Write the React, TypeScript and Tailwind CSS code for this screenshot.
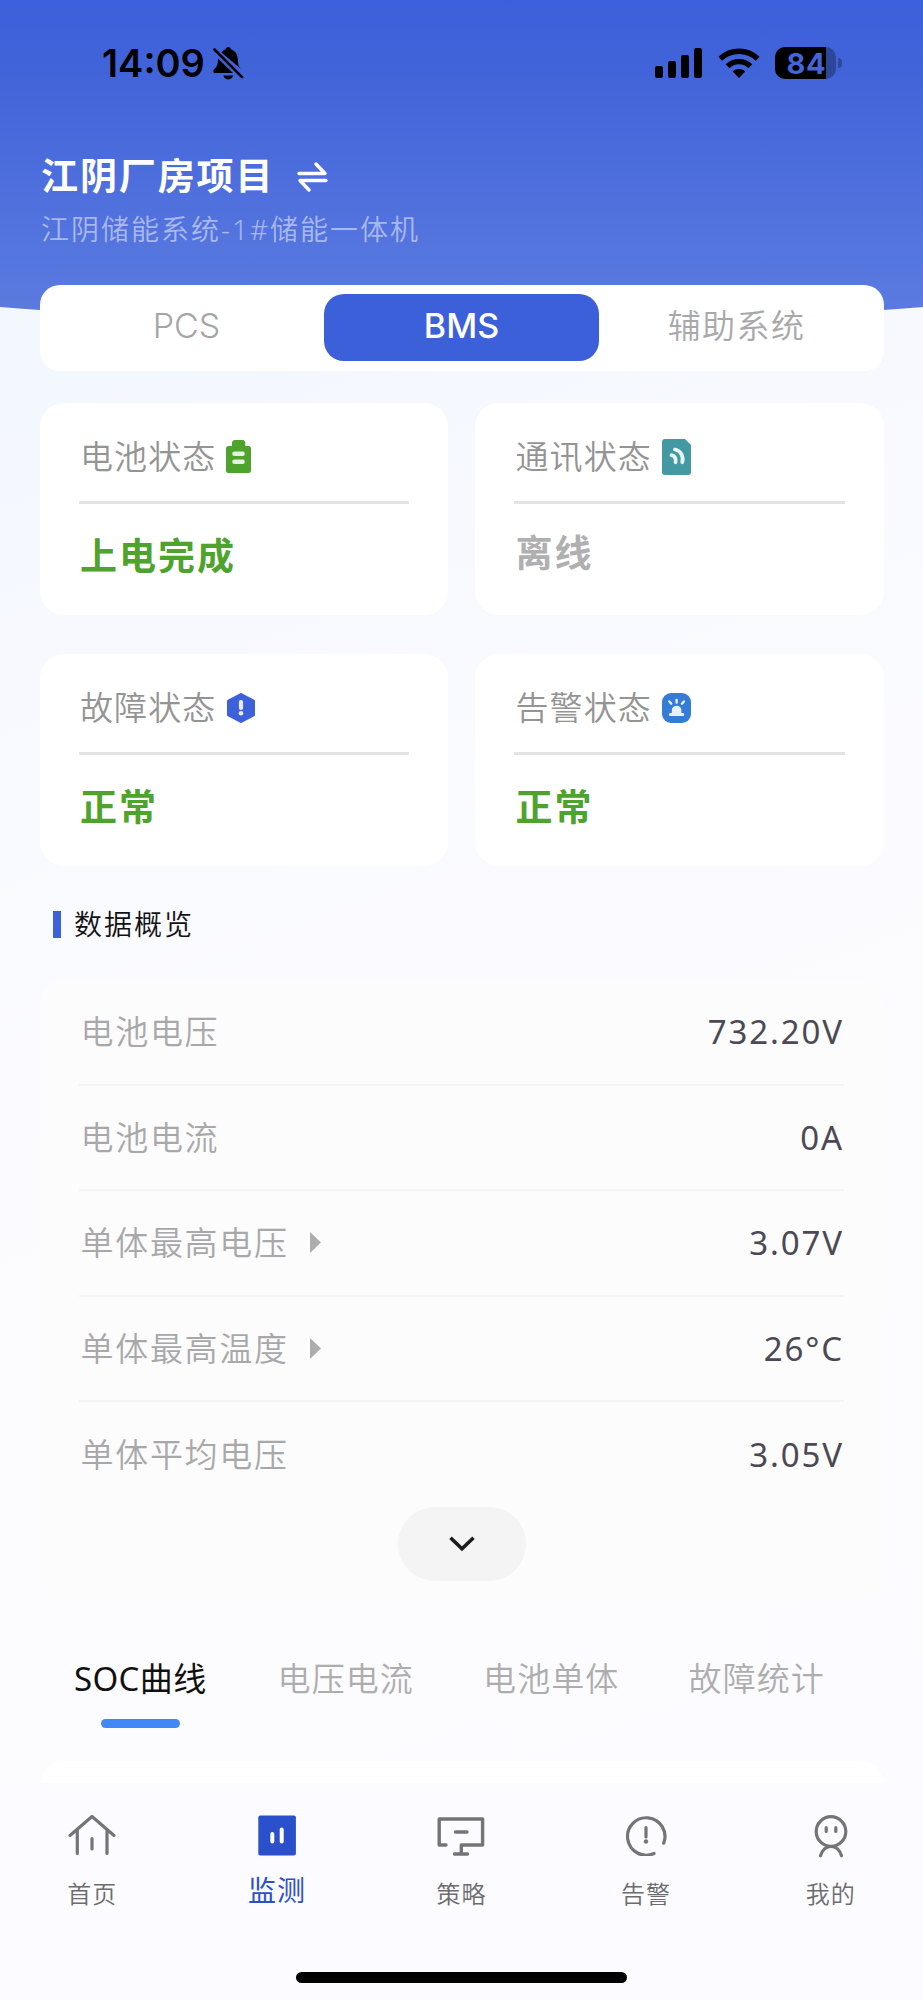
import React from 'react';
import clsx from 'clsx';

interface StatusItem {
  label: string;
  value: string;
  online: boolean;
  icon: React.ReactNode;
}

interface DataRow {
  label: string;
  value: string;
  expandable?: boolean;
}

interface NavItem {
  label: string;
  icon: React.ReactNode;
  active?: boolean;
}

const BatteryIcon = () => (
  <svg width="25" height="33" viewBox="0 0 25 33">
    <path d="M8 0h9.500l1.800 2v4H22.500a2.500 2.500 0 0 1 2.500 2.500v22a2.500 2.500 0 0 1-2.500 2.500H2.500A2.500 2.500 0 0 1 0 30.500v-22A2.500 2.500 0 0 1 2.500 6H6V2z" fill="#4ea32d" />
    <rect x="6.300" y="11.500" width="12.500" height="4.600" rx="2" fill="#e4f2df" />
    <rect x="6.300" y="19.500" width="12.500" height="4.600" rx="2" fill="#e4f2df" />
  </svg>
);

const SignalIcon = () => (
  <svg width="29" height="36" viewBox="0 0 29 36">
    <path d="M3 0h20l6 6v27a3 3 0 0 1-3 3H3a3 3 0 0 1-3-3V3a3 3 0 0 1 3-3z" fill="#4299a2" />
    <g fill="none" stroke="#e6f5f6" strokeWidth="3.800" strokeLinecap="round">
      <path d="M9.500 16.200c3 .4 5 3.200 4 7" />
      <path d="M13 10.500c6 1.200 8.700 7 7.300 12.700" />
    </g>
  </svg>
);

const FaultIcon = () => (
  <svg width="30" height="30" viewBox="0 0 30 30">
    <path d="M15 1.500 27.500 8v14L15 28.500 2.500 22V8z" fill="#3d60db" stroke="#3d60db" strokeWidth="3" strokeLinejoin="round" />
    <rect x="12.900" y="7" width="4.200" height="10" rx="2" fill="#e8edfc" />
    <circle cx="15" cy="20.300" r="2.300" fill="#e8edfc" />
  </svg>
);

const AlarmIcon = () => (
  <svg width="29" height="30" viewBox="0 0 29 30">
    <rect width="29" height="30" rx="9" fill="#357cd6" />
    <path d="M9.800 20v-2.500a4.800 4.800 0 0 1 9.600 0V20h1.400a1.500 1.500 0 0 1 0 3H8.500a1.500 1.500 0 0 1 0-3z" fill="#e8f1fc" />
    <path d="M14.600 7v2.500M7.300 8.500l2 2.200M21.900 8.500l-2 2.200" stroke="#e8f1fc" strokeWidth="2.400" strokeLinecap="round" />
  </svg>
);

const HomeIcon = () => (
  <svg width="48" height="42" viewBox="0 0 48 42" fill="none" stroke="#747476" strokeWidth="3.200" strokeLinecap="round" strokeLinejoin="round">
    <path d="M2 21.500 24 2.500l22 19M9.300 16.500v23M39 16.500v23M24 24.500v10.500" />
  </svg>
);

const MonitorIcon = () => (
  <svg width="48" height="42" viewBox="0 0 48 42">
    <rect x="5.300" y="1.500" width="37.600" height="40" rx="2" fill="#2a50cc" />
    <path d="M19.300 20v7.500M28.700 15.500v12" stroke="#fff" strokeWidth="4" strokeLinecap="round" />
  </svg>
);

const StrategyIcon = () => (
  <svg width="48" height="42" viewBox="0 0 48 42" fill="none" stroke="#747476" strokeWidth="3.400" strokeLinecap="round" strokeLinejoin="round">
    <path d="M9 31H2.200V5h43.400v26H24.300M24.300 31v9M17.500 40h13M18.500 18h11.500" />
  </svg>
);

const WarnIcon = () => (
  <svg width="48" height="42" viewBox="0 0 48 42" fill="none" stroke="#747476" strokeWidth="3.200" strokeLinecap="round">
    <path d="M41.700 29.200A18.700 18.700 0 1 0 32 39.500" />
    <path d="M24 13.500v9.500" />
    <circle cx="24" cy="27.500" r="2.200" fill="#747476" stroke="none" />
  </svg>
);

const MineIcon = () => (
  <svg width="48" height="42" viewBox="0 0 48 42" fill="none" stroke="#747476" strokeWidth="3.200" strokeLinecap="round" className="overflow-visible">
    <circle cx="24" cy="17.500" r="14.800" />
    <path d="M19.200 13.500v4M28.800 13.500v4M13.500 41.800C15.500 35.500 19 32.500 24 32.500s8.500 3 10.500 9.300" />
  </svg>
);

const statusItems: StatusItem[] = [
  { label: '电池状态', value: '上电完成', online: true, icon: <BatteryIcon /> },
  { label: '通讯状态', value: '离线', online: false, icon: <SignalIcon /> },
  { label: '故障状态', value: '正常', online: true, icon: <FaultIcon /> },
  { label: '告警状态', value: '正常', online: true, icon: <AlarmIcon /> }
];

const dataRows: DataRow[] = [
  { label: '电池电压', value: '732.20V' },
  { label: '电池电流', value: '0A' },
  { label: '单体最高电压', value: '3.07V', expandable: true },
  { label: '单体最高温度', value: '26°C', expandable: true },
  { label: '单体平均电压', value: '3.05V' }
];

const chartTabs = ['SOC曲线', '电压电流', '电池单体', '故障统计'];

const navItems: NavItem[] = [
  { label: '首页', icon: <HomeIcon /> },
  { label: '监测', icon: <MonitorIcon />, active: true },
  { label: '策略', icon: <StrategyIcon /> },
  { label: '告警', icon: <WarnIcon /> },
  { label: '我的', icon: <MineIcon /> }
];

const StatusBar = () => (
  <div className="flex h-[126px] items-center justify-between pl-[102px] pr-[81px] text-black">
    <div className="flex items-center">
      <span className="w-[111px] whitespace-nowrap font-['Inter',sans-serif] text-[38px] font-semibold leading-none">14:09</span>
      <svg width="31" height="33" viewBox="0 0 31 33">
        <path d="M8.500 5.500C10 3.600 11.500 2.600 12.500 2.200 13 .8 14 0 15.200 0s2.200.8 2.700 2.200c4.600 1.800 7 5.600 7 10.800 0 4.500.8 6.500 3.400 9.200z" />
        <path d="M5 11.500 20 26H2C.3 26-.3 24 .8 22.800 4 19.500 5 18 5 11.500z" />
        <path d="M10.300 28.500h9.900c-.6 2.300-2.500 3.900-5 3.900s-4.300-1.600-4.900-3.900z" />
        <path d="M1.500 2.500 29 30.200" stroke="#000" strokeWidth="2.600" strokeLinecap="round" />
      </svg>
    </div>
    <div className="flex items-center">
      <svg width="48" height="32" viewBox="0 0 48 32" className="mr-[15px]">
        <rect x="0" y="19" width="8" height="12" rx="2.200" />
        <rect x="13" y="14" width="8" height="17" rx="2.200" />
        <rect x="26" y="8" width="8" height="23" rx="2.200" />
        <rect x="39" y="1" width="8" height="30" rx="2.200" />
      </svg>
      <svg width="42" height="32" viewBox="0 0 42 32" className="mr-[15px]">
        <path d="M21 31l-6.300-6.600c3.600-3.100 9-3.100 12.600 0z" />
        <path d="M9.600 19.300a16.300 16.300 0 0 1 22.800 0" fill="none" stroke="#000" strokeWidth="5.400" />
        <path d="M2.300 11.800a27 27 0 0 1 37.400 0" fill="none" stroke="#000" strokeWidth="5.400" />
      </svg>
      <div className="flex h-8 w-[61px] overflow-hidden rounded-[10px] bg-[#2e4899]">
        <div className="flex w-[51px] items-center justify-end bg-black font-['Inter',sans-serif] text-[29px] font-bold leading-none tracking-[0.500px] text-[#4365d8]">84</div>
      </div>
      <div className="ml-[2px] h-[10px] w-[4px] rounded-r-full bg-[#2e4899]" />
    </div>
  </div>
);

const StatusCard: React.FC<{ item: StatusItem }> = ({ item }) => (
  <div className="h-[212px] rounded-[24px] bg-white px-[39px]">
    <div className="flex h-[101px] items-center gap-[10px] border-b-[3px] border-[#e3e3e3] pt-[9px]">
      <span className="pl-[1.500px] text-[33px] font-[350] leading-none tracking-[1.100px] text-[#949494]">{item.label}</span>
      {item.icon}
    </div>
    <div
      className={clsx(
        'pl-[1.500px] text-[37px] font-bold leading-[40px] tracking-[2px]',
        item.online ? 'pt-[32px] text-[#4ea32d]' : 'pt-[29px] text-[#b0b0b0]'
      )}
    >
      {item.value}
    </div>
  </div>
);

const App: React.FC = () => {
  return (
    <div className="flex h-[2000px] w-[923px] flex-col overflow-hidden bg-[linear-gradient(160deg,#f3f7fe_18%,#f9faff_36%,#fcfbfe_60%,#fcfbff_100%)] font-['Noto_Sans','Noto_Sans_CJK_SC',sans-serif]">
      <header className="h-[325px] shrink-0 bg-[linear-gradient(180deg,#3c5fdb_0%,#4365d9_27%,#5d7ce1_100%)] [clip-path:ellipse(152%_100%_at_50%_0)]">
        <StatusBar />
        <div className="px-[41px] pt-[25px]">
          <div className="flex items-center gap-[26px]">
            <h1 className="text-[37px] font-bold leading-[50px] tracking-[1.900px] text-white">江阴厂房项目</h1>
            <svg width="31" height="30" viewBox="0 0 31 30" fill="none" stroke="#fff" strokeWidth="3.400" strokeLinecap="round" strokeLinejoin="round" className="mt-px -ml-[3px]">
              <path d="M2 11.500h26L19 2M29 18.500H3L12 28" />
            </svg>
          </div>
          <p className="mt-[8px] text-[28px] font-[350] leading-[40px] tracking-[2px] text-white/50">江阴储能系统-1#储能一体机</p>
        </div>
      </header>

      <main className="min-h-0 flex-1 overflow-visible px-[39.500px]">
        {/* Device tabs */}
        <div className="relative -mt-[40px] grid h-[86px] grid-cols-3 rounded-[20px] bg-white px-[9.500px] pb-[10px] pt-[9px] text-center text-[33px] leading-[63px]">
          <div className="font-['Inter',sans-serif] text-[34px] font-light text-[#a5a5a8]">PCS</div>
          <div className="rounded-[20px] bg-[#3c60d9] font-['Inter',sans-serif] text-[34px] font-medium text-white">BMS</div>
          <div className="font-[350] tracking-[1.400px] text-[#a8a8ab]">辅助系统</div>
        </div>

        <div className="mt-[32px] grid grid-cols-2 gap-x-[27px] gap-y-[39px]">
          {statusItems.map((item) => (
            <StatusCard key={item.label} item={item} />
          ))}
        </div>

        {/* Data overview */}
        <div className="mt-[38px] flex h-[40px] items-center gap-[13px] pl-[13.500px]">
          <span className="h-[27px] w-[8px] bg-[#3d61da]" />
          <h2 className="text-[28px] font-[350] leading-none tracking-[2px] text-[#111113]">数据概览</h2>
        </div>

        <div className="mt-[36px] h-[620px] rounded-[24px] bg-[#fcfcfc] px-[39.500px]">
          {dataRows.map((row, index) => (
            <div
              key={row.label}
              className={clsx(
                'flex h-[105.500px] items-center justify-between text-[33px] leading-none',
                index < dataRows.length - 1 && 'border-b-2 border-[#f4f4f4]'
              )}
            >
              <div className="flex items-center pl-[1.500px] font-[350] tracking-[1.700px] text-[#a8a8ab]">
                {row.label}
                {row.expandable && (
                  <svg width="11" height="21" viewBox="0 0 11 21" className="ml-[21px]">
                    <path d="M0 0l11 10.500L0 21z" fill="#adadb0" />
                  </svg>
                )}
              </div>
              <span className="tracking-[1.900px] text-[#4b4953]">{row.value}</span>
            </div>
          ))}
          <button className="mx-auto -mt-px flex h-[74px] w-[128px] items-center justify-center rounded-full bg-[#f4f4f4]">
            <svg width="26" height="16" viewBox="0 0 26 16" fill="none" stroke="#1d1d1f" strokeWidth="3.600">
              <path d="M1.500 1.800 13 12.800l11.500-11" />
            </svg>
          </button>
        </div>

        {/* Chart tabs */}
        <div className="-ml-[2px] mt-[59px] grid w-[822px] grid-cols-4">
          {chartTabs.map((tab, index) => (
            <div key={tab} className="flex flex-col items-center">
              <span
                className={clsx(
                  'text-[33px] leading-[40px]',
                  index === 0 ? 'tracking-[0.400px] text-[#111]' : 'font-[350] tracking-[1.100px] text-[#adadad]'
                )}
              >
                {tab}
              </span>
              {index === 0 && <span className="mt-[20px] h-[9px] w-[79px] rounded-full bg-[#4088f5]" />}
            </div>
          ))}
        </div>

        <div className="mt-[33px] h-[100px] rounded-t-[24px] bg-white" />
      </main>

      <nav className="relative flex h-[217px] shrink-0 flex-col items-center justify-between bg-[#fcfbff] pb-[17px]">
        <div className="grid w-full grid-cols-5 pt-[31px]">
          {navItems.map((item) => (
            <div key={item.label} className="flex flex-col items-center">
              {item.icon}
              <span
                className={clsx(
                  'leading-[32px]',
                  item.active
                    ? 'mt-[18px] text-[28px] tracking-[1px] text-[#2a50cc]'
                    : 'mt-[22px] text-[24px] font-[350] tracking-[1px] text-[#6c6c6e]'
                )}
              >
                {item.label}
              </span>
            </div>
          ))}
        </div>
        <div className="h-[11px] w-[331px] rounded-full bg-black" />
      </nav>
    </div>
  );
};

export default App;
